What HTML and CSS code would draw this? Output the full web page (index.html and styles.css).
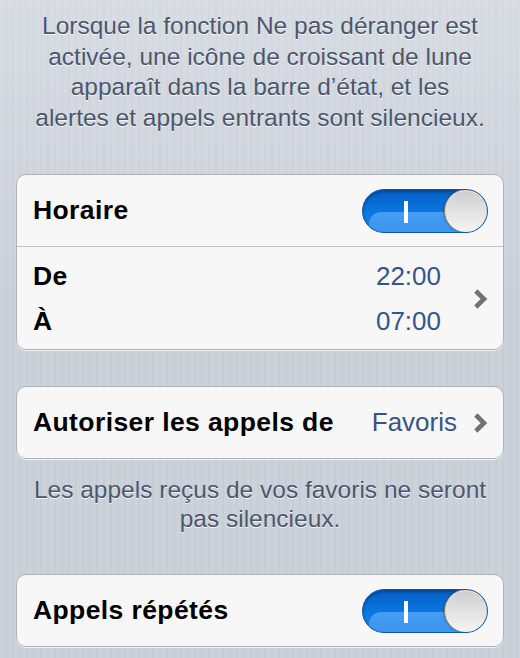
FILE: index.html
```html
<!DOCTYPE html>
<html lang="fr">
<head>
<meta charset="utf-8">
<link rel="stylesheet" href="styles.css">
</head>
<body>
<div class="screen">
  <p class="note note-top">Lorsque la fonction Ne pas déranger est activée, une icône de croissant de lune apparaît dans la barre d’état, et les<br>alertes et appels entrants sont silencieux.</p>

  <div class="group group-schedule">
    <div class="row row-toggle">
      <span class="label">Horaire</span>
      <span class="switch"><span class="switch-gloss"></span><span class="switch-mark"></span><span class="knob"></span></span>
    </div>
    <div class="row row-times">
      <div class="times">
        <div class="time-line"><span class="label">De</span><span class="value">22:00</span></div>
        <div class="time-line"><span class="label">À</span><span class="value">07:00</span></div>
      </div>
      <svg class="chevron" width="15" height="22" viewBox="0 0 15 22"><path d="M2.8 3 L11 11 L2.8 19" fill="none" stroke="#727272" stroke-width="4.6" stroke-linejoin="miter" stroke-linecap="butt"/></svg>
    </div>
  </div>

  <div class="group group-allow">
    <div class="row row-link">
      <span class="label">Autoriser les appels de</span>
      <span class="value value-link">Favoris</span>
      <svg class="chevron" width="15" height="22" viewBox="0 0 15 22"><path d="M2.8 3 L11 11 L2.8 19" fill="none" stroke="#727272" stroke-width="4.6" stroke-linejoin="miter" stroke-linecap="butt"/></svg>
    </div>
  </div>

  <p class="note note-footer">Les appels reçus de vos favoris ne seront pas silencieux.</p>

  <div class="group group-repeat">
    <div class="row row-toggle">
      <span class="label">Appels répétés</span>
      <span class="switch"><span class="switch-gloss"></span><span class="switch-mark"></span><span class="knob"></span></span>
    </div>
  </div>
</div>
</body>
</html>
```
FILE: styles.css
```css
html, body {
  margin: 0;
  padding: 0;
}
body {
  width: 520px;
  height: 658px;
  overflow: hidden;
  font-family: "Liberation Sans", Arial, sans-serif;
  background-color: #cbd1d9;
  background-image:
    linear-gradient(to bottom, rgba(255,255,255,0.25), rgba(255,255,255,0) 300px),
    repeating-linear-gradient(to right, #ccd2da 0, #ccd2da 5px, #c7cdd6 5px, #c7cdd6 7px);
}
.screen {
  padding: 11px 16px 0;
}
.note {
  margin: 0;
  text-align: center;
  color: #4c566c;
  font-size: 24.5px;
  line-height: 30.5px;
  text-shadow: 0 1px 0 rgba(255,255,255,0.8);
}
.note-top {
  padding: 0 6px;
}
.note-footer {
  margin-top: 16px;
  line-height: 29px;
  padding: 0 10px;
}
.group {
  background: #f7f7f7;
  border: 1px solid #aeb1b6;
  border-radius: 10px;
  box-shadow: 0 1px 0 rgba(255,255,255,0.7);
  overflow: hidden;
}
.group-schedule {
  margin-top: 41px;
}
.group-allow {
  margin-top: 36px;
}
.group-repeat {
  margin-top: 41px;
}
.row {
  display: flex;
  align-items: center;
  padding: 0 15px 0 16px;
}
.label {
  font-weight: bold;
  font-size: 26.5px;
  letter-spacing: 0.4px;
  color: #000;
}
.value {
  font-size: 26px;
  color: #385487;
}
.row-toggle {
  height: 71px;
  justify-content: space-between;
}
.group-schedule .row-toggle {
  border-bottom: 1px solid #c3c3c6;
}
.row-times {
  padding-top: 7px;
  padding-bottom: 5px;
}
.times {
  flex: 1;
  padding-right: 32px;
}
.time-line {
  height: 45px;
  display: flex;
  align-items: center;
  justify-content: space-between;
}
.row-link {
  height: 71px;
}
.row-link .label {
  flex: 1;
}
.value-link {
  margin-right: 16px;
}
.chevron {
  display: block;
  flex: none;
}
.switch {
  position: relative;
  display: block;
  width: 126px;
  height: 44px;
  border-radius: 22px;
  box-sizing: border-box;
  border: 1px solid #0b5aa8;
  background: linear-gradient(to bottom, #0560c4 0%, #0a74e0 50%, #1a80e6 100%);
  box-shadow: inset 0 2px 3px rgba(0,0,0,0.3);
  overflow: hidden;
}
.switch-gloss {
  position: absolute;
  left: 6px;
  right: 0;
  top: 22px;
  bottom: 0;
  border-radius: 12px 0 0 0;
  background: linear-gradient(to bottom, rgba(120,190,255,0.55), rgba(120,190,255,0.35));
}
.switch-mark {
  position: absolute;
  left: 41px;
  top: 11px;
  width: 4px;
  height: 22px;
  background: #fff;
}
.knob {
  position: absolute;
  right: -1px;
  top: -1px;
  width: 44px;
  height: 44px;
  box-sizing: border-box;
  border-radius: 50%;
  border: 1.5px solid #7e7e7e;
  background: linear-gradient(to bottom, #cdcdcd 0%, #e4e4e4 55%, #f4f4f4 100%);
  box-shadow: inset 0 1px 0 rgba(255,255,255,0.6), -1px 0 2px rgba(0,0,0,0.2);
}
```
